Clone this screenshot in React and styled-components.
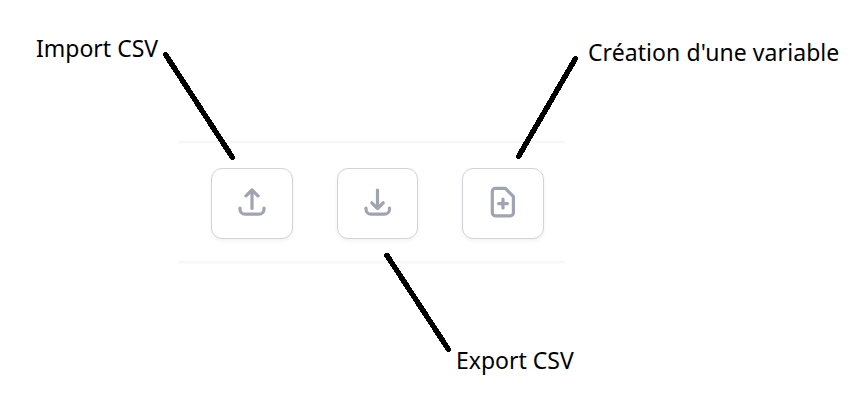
import React from "react";
import styled, { createGlobalStyle } from "styled-components";

const GlobalStyle = createGlobalStyle`
  body { margin: 0; background: #fff; }
`;

const Canvas = styled.main`
  position: relative;
  box-sizing: border-box;
  width: 859px;
  height: 408px;
  padding: 141px 0 0 178px;
  overflow: hidden;
  background: #fff;
`;

const Toolbar = styled.div`
  box-sizing: border-box;
  display: grid;
  grid-template-columns: 82px 81px 82px;
  column-gap: 44px;
  width: 387px;
  height: 123px;
  padding: 27px 0 0 33px;
  background:
    linear-gradient(#f4f4f5, #fcfcfc) top / 100% 3px no-repeat,
    linear-gradient(#f5f5f6, #fcfcfc) bottom / 100% 3px no-repeat;
`;

const ToolButton = styled.button`
  box-sizing: border-box;
  display: flex;
  align-items: center;
  justify-content: center;
  height: 71px;
  padding: 0;
  border: 1px solid #d2d2db;
  border-radius: 11px;
  background: #fff;
  box-shadow: 0 2px 4px rgba(20, 20, 50, 0.05);
`;

const Icon = styled.svg`
  flex: none;
  width: 32px;
  height: 33px;
  overflow: visible;
  fill: none;
  stroke: #9fa3b2;
  stroke-width: 3.2;
  stroke-linecap: round;
  stroke-linejoin: round;
`;

const Pointers = styled.svg`
  position: absolute;
  inset: 0;
  width: 859px;
  height: 408px;
  fill: none;
  stroke: #000;
  stroke-width: 5.4;
  stroke-linecap: round;
  pointer-events: none;
`;

const Label = styled.span`
  position: absolute;
  left: ${({ $x }) => $x}px;
  top: ${({ $y }) => $y}px;
  font: 400 23px/30px "Noto Sans", "Open Sans", sans-serif;
  letter-spacing: ${({ $spacing }) => $spacing}px;
  white-space: nowrap;
  color: #000;
`;

export default function App() {
  return (
    <Canvas>
      <GlobalStyle />
      <Toolbar>
        <ToolButton aria-label="Import CSV">
          <Icon viewBox="0 0 32 33">
            <path d="M16 21.5V3M10 8.9 16 3l6 5.9M4 21v1.2a5 5 0 0 0 5 5h14a5 5 0 0 0 5-5v-1.2" />
          </Icon>
        </ToolButton>
        <ToolButton aria-label="Export CSV">
          <Icon viewBox="0 0 32 33">
            <path d="M15.5 3v18.5M9.8 15.8l5.7 5.7 5.7-5.7M4 21v1.2a5 5 0 0 0 5 5h13.5a5 5 0 0 0 5-5v-1.2" />
          </Icon>
        </ToolButton>
        <ToolButton aria-label="Création d'une variable">
          <Icon viewBox="0 0 32 33">
            <path d="M8.3 1.4H18.4L26.4 9.6V25.8a3 3 0 0 1-3 3H8.3a3 3 0 0 1-3-3V4.4a3 3 0 0 1 3-3ZM16 12.2v8.8M11.6 16.6h8.8" />
          </Icon>
        </ToolButton>
      </Toolbar>
      <Pointers shapeRendering="crispEdges">
        <path d="M165.5 54.5 232.5 157.5M575.5 58.5 518.5 156.5M387 255.5 448.5 349.5" />
      </Pointers>
      <Label $x={36} $y={33} $spacing={0}>Import CSV</Label>
      <Label $x={588} $y={37} $spacing={0.07}>Création d'une variable</Label>
      <Label $x={456} $y={345} $spacing={0}>Export CSV</Label>
    </Canvas>
  );
}
